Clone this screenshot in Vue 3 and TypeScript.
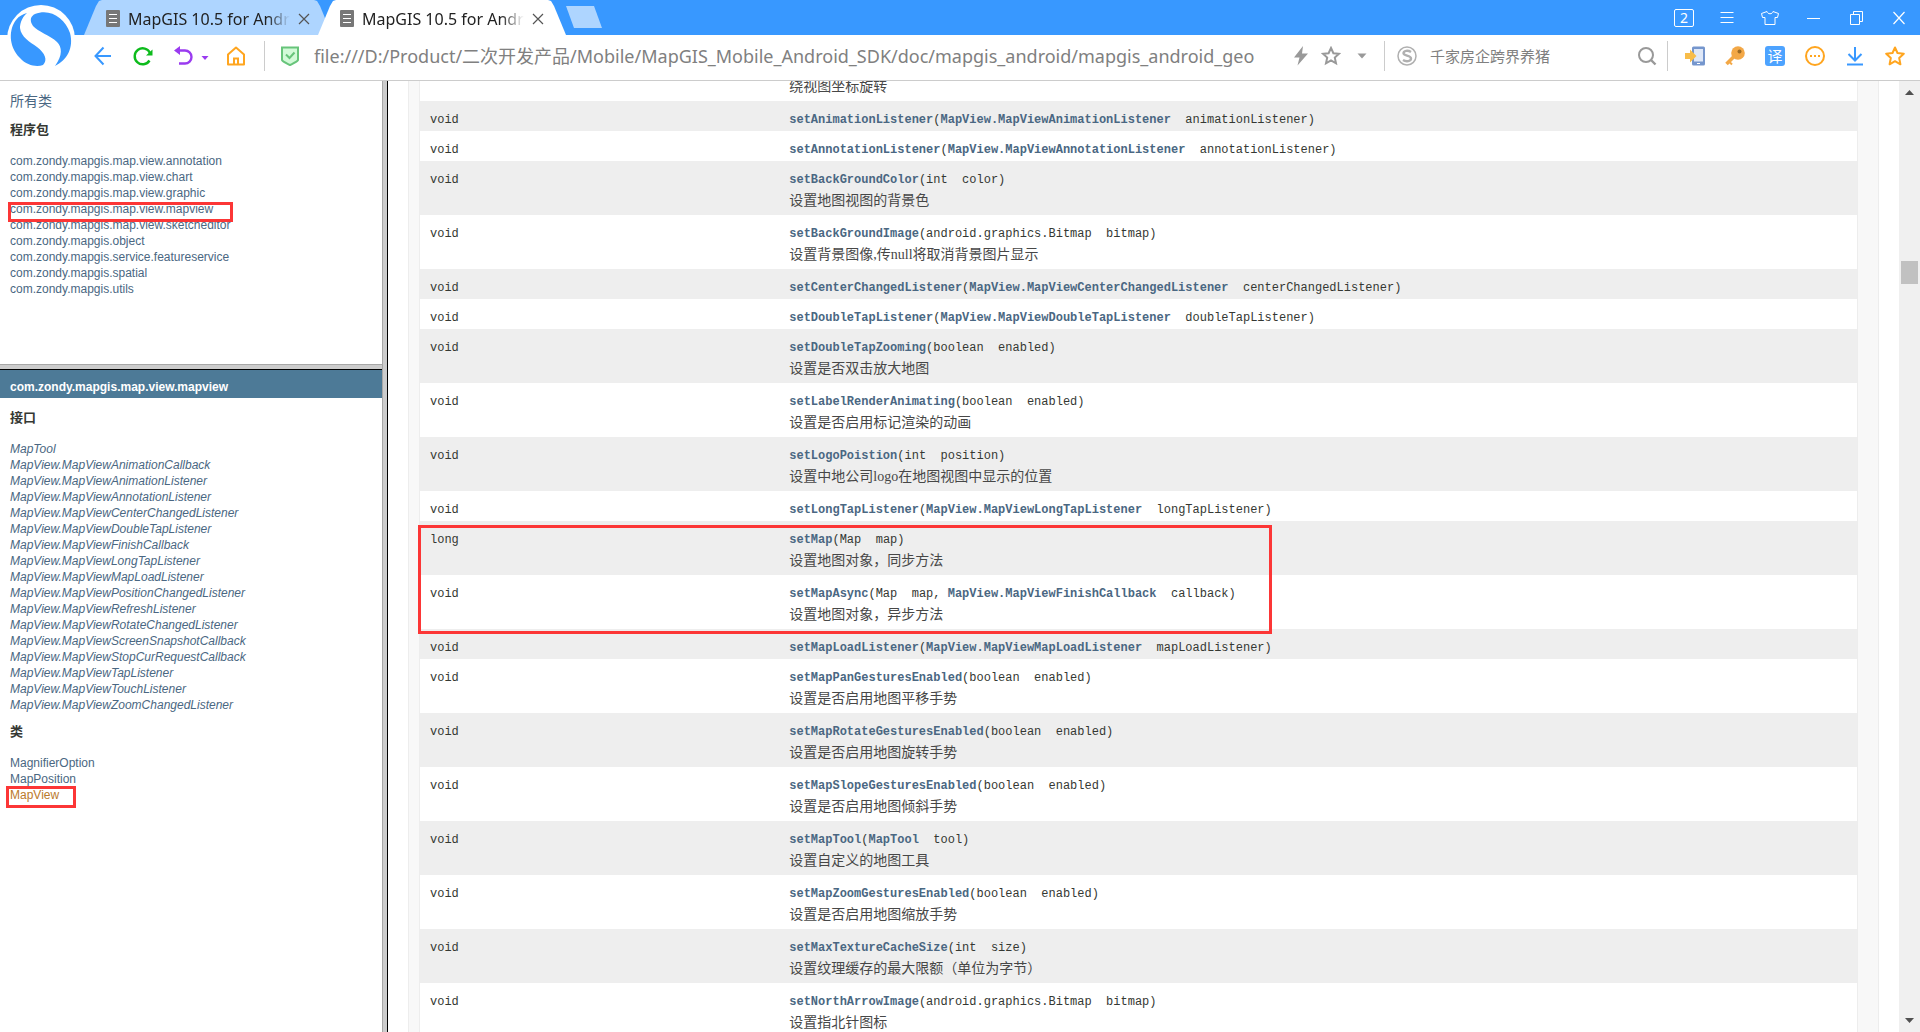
<script setup lang="ts">
import { ref } from 'vue'

interface Part {
  text: string
  link?: boolean
}
interface Method {
  type: string
  name: string
  params: Part[]
  note?: string
}

const t = (text: string): Part => ({ text })
const a = (text: string): Part => ({ text, link: true })
const gap = '\u00a0\u00a0'

const tabs = ref([
  { id: 1, title: 'MapGIS 10.5 for Andro', active: false },
  { id: 2, title: 'MapGIS 10.5 for Andro', active: true },
])

const address = ref(
  'file:///D:/Product/二次开发产品/Mobile/MapGIS_Mobile_Android_SDK/doc/mapgis_android/mapgis_android_geo',
)
const query = ref('')

const packages: string[] = [
  'com.zondy.mapgis.map.view.annotation',
  'com.zondy.mapgis.map.view.chart',
  'com.zondy.mapgis.map.view.graphic',
  'com.zondy.mapgis.map.view.mapview',
  'com.zondy.mapgis.map.view.sketcheditor',
  'com.zondy.mapgis.object',
  'com.zondy.mapgis.service.featureservice',
  'com.zondy.mapgis.spatial',
  'com.zondy.mapgis.utils',
]

const interfaces: string[] = [
  'MapTool',
  'MapView.MapViewAnimationCallback',
  'MapView.MapViewAnimationListener',
  'MapView.MapViewAnnotationListener',
  'MapView.MapViewCenterChangedListener',
  'MapView.MapViewDoubleTapListener',
  'MapView.MapViewFinishCallback',
  'MapView.MapViewLongTapListener',
  'MapView.MapViewMapLoadListener',
  'MapView.MapViewPositionChangedListener',
  'MapView.MapViewRefreshListener',
  'MapView.MapViewRotateChangedListener',
  'MapView.MapViewScreenSnapshotCallback',
  'MapView.MapViewStopCurRequestCallback',
  'MapView.MapViewTapListener',
  'MapView.MapViewTouchListener',
  'MapView.MapViewZoomChangedListener',
]

const classes: string[] = ['MagnifierOption', 'MapPosition', 'MapView']

const flag = (type: string): Part[] => [t(`${type}${gap}enabled`)]
const listener = (cls: string, arg: string): Part[] => [a(`MapView.${cls}`), t(`${gap}${arg}`)]

const methods: Method[] = [
  { type: 'void', name: 'rotateView', params: [t(`double${gap}angle`)], note: '绕视图坐标旋转' },
  { type: 'void', name: 'setAnimationListener', params: listener('MapViewAnimationListener', 'animationListener') },
  { type: 'void', name: 'setAnnotationListener', params: listener('MapViewAnnotationListener', 'annotationListener') },
  { type: 'void', name: 'setBackGroundColor', params: [t(`int${gap}color`)], note: '设置地图视图的背景色' },
  { type: 'void', name: 'setBackGroundImage', params: [t(`android.graphics.Bitmap${gap}bitmap`)], note: '设置背景图像,传null将取消背景图片显示' },
  { type: 'void', name: 'setCenterChangedListener', params: listener('MapViewCenterChangedListener', 'centerChangedListener') },
  { type: 'void', name: 'setDoubleTapListener', params: listener('MapViewDoubleTapListener', 'doubleTapListener') },
  { type: 'void', name: 'setDoubleTapZooming', params: flag('boolean'), note: '设置是否双击放大地图' },
  { type: 'void', name: 'setLabelRenderAnimating', params: flag('boolean'), note: '设置是否启用标记渲染的动画' },
  { type: 'void', name: 'setLogoPoistion', params: [t(`int${gap}position`)], note: '设置中地公司logo在地图视图中显示的位置' },
  { type: 'void', name: 'setLongTapListener', params: listener('MapViewLongTapListener', 'longTapListener') },
  { type: 'long', name: 'setMap', params: [t(`Map${gap}map`)], note: '设置地图对象，同步方法' },
  { type: 'void', name: 'setMapAsync', params: [t(`Map${gap}map, `), a('MapView.MapViewFinishCallback'), t(`${gap}callback`)], note: '设置地图对象，异步方法' },
  { type: 'void', name: 'setMapLoadListener', params: listener('MapViewMapLoadListener', 'mapLoadListener') },
  { type: 'void', name: 'setMapPanGesturesEnabled', params: flag('boolean'), note: '设置是否启用地图平移手势' },
  { type: 'void', name: 'setMapRotateGesturesEnabled', params: flag('boolean'), note: '设置是否启用地图旋转手势' },
  { type: 'void', name: 'setMapSlopeGesturesEnabled', params: flag('boolean'), note: '设置是否启用地图倾斜手势' },
  { type: 'void', name: 'setMapTool', params: [a('MapTool'), t(`${gap}tool`)], note: '设置自定义的地图工具' },
  { type: 'void', name: 'setMapZoomGesturesEnabled', params: flag('boolean'), note: '设置是否启用地图缩放手势' },
  { type: 'void', name: 'setMaxTextureCacheSize', params: [t(`int${gap}size`)], note: '设置纹理缓存的最大限额（单位为字节）' },
  { type: 'void', name: 'setNorthArrowImage', params: [t(`android.graphics.Bitmap${gap}bitmap`)], note: '设置指北针图标' },
]
</script>

<template>
  <div class="browser">
    <header class="chrome">
      <svg class="logo" viewBox="0 0 80 80" aria-hidden="true">
        <circle cx="41" cy="39" r="34" fill="#fff" />
        <path fill="#3898ff" d="M27 13C21 18 20 25 20 28C21 37 30 42 37 47C45 53 48 60 43 65C37 67 27 66 20 58C8 46 9 29 16 20C19 16 23 14 27 13Z" />
        <path fill="#3898ff" d="M35 14C50 8 65 18 70 33C74 48 67 60 55 66C63 55 62 47 57 42C50 35 38 32 33 26C29 20 31 16 35 14Z" />
      </svg>
      <div class="titlebar">
        <div class="tabs">
          <div v-for="tab in tabs" :key="tab.id" class="tab" :class="{ active: tab.active }">
            <svg class="doc" viewBox="0 0 14 18" aria-hidden="true">
              <rect width="14" height="17" y="0" rx="1" fill="#777" />
              <path d="M3 4.5H11M3 8.5H11M3 12.5H11" stroke="#fff" />
            </svg>
            <span class="tab-title">{{ tab.title }}</span>
            <button class="tab-close" type="button" aria-label="关闭标签">
              <svg viewBox="0 0 12 12"><path d="M1 1L11 11M11 1L1 11" stroke="#555" stroke-width="1.2" fill="none" /></svg>
            </button>
          </div>
          <button class="new-tab" type="button" aria-label="新建标签"></button>
        </div>
        <div class="window-tools">
          <button type="button" class="count">2</button>
          <button type="button" aria-label="菜单">
            <svg viewBox="0 0 20 20"><path d="M3.5 4.5H16.5M3.5 9.5H16.5M3.5 14.5H16.5" stroke="#fff" /></svg>
          </button>
          <button type="button" aria-label="皮肤">
            <svg viewBox="0 0 20 20"><path d="M7 3.5L1.5 5.5L2.5 9.5H5V16.5H15V9.5H17.5L18.5 5.5L13 3.5C12.5 6.5 7.5 6.5 7 3.5Z" stroke="#fff" fill="none" /></svg>
          </button>
          <button type="button" aria-label="最小化">
            <svg viewBox="0 0 20 20"><path d="M4 10.5H17" stroke="#fff" /></svg>
          </button>
          <button type="button" aria-label="还原">
            <svg viewBox="0 0 20 20"><path d="M4.5 6.5H13.5V16.5H4.5ZM7.5 6.5V3.5H16.5V13.5H13.5" stroke="#fff" fill="none" /></svg>
          </button>
          <button type="button" aria-label="关闭">
            <svg viewBox="0 0 20 20"><path d="M4.5 4L15.5 16M15.5 4L4.5 16" stroke="#fff" stroke-width="1.2" fill="none" /></svg>
          </button>
        </div>
      </div>

      <div class="toolbar">
        <div class="nav">
          <button type="button" aria-label="后退">
            <svg viewBox="0 0 20 20"><path d="M18 10H3M10.5 1.5L2.5 10L10.5 18.5" stroke="#3898ff" stroke-width="2" fill="none" /></svg>
          </button>
          <button type="button" aria-label="刷新">
            <svg viewBox="0 0 20 20"><path d="M16.5 14.5A8 8 0 1 1 17 7" stroke="#0dbb1c" stroke-width="2.4" fill="none" /><path d="M19.5 3.5V9.5H13Z" fill="#0dbb1c" /></svg>
          </button>
          <button type="button" aria-label="撤销">
            <svg viewBox="0 0 20 20"><path d="M3 4.5H12A6.500 6.500 0 0 1 12 17.500H6" stroke="#9a3bf0" stroke-width="2.400" fill="none" /><path d="M1 4.500L7 0V9Z" fill="#9a3bf0" /></svg>
          </button>
          <button type="button" class="caret" aria-label="撤销列表">
            <svg viewBox="0 0 10 6"><path d="M1.5 1H8.5L5 5Z" fill="#9a3bf0" /></svg>
          </button>
          <button type="button" aria-label="主页">
            <svg viewBox="0 0 20 20"><path d="M2 8.5L10 1.500L18 8.500V18.500H2Z" stroke="#ffa51f" stroke-width="2" fill="none" stroke-linejoin="round" /><path d="M8 18V12.500H12V18" stroke="#ffa51f" stroke-width="2" fill="none" /></svg>
          </button>
        </div>
        <div class="location">
          <svg class="icon" viewBox="0 0 20 20" aria-hidden="true"><path d="M2 1.5H18V14C17 16 14 17 10 19C6 17 3 16 2 14Z" stroke="#67c47a" stroke-width="2" fill="#d2fad8" /><path d="M6 8.5L9.5 12L14.5 6.500" stroke="#67c47a" stroke-width="2" fill="none" /></svg>
          <input v-model="address" class="address" type="text" aria-label="地址" />
          <button type="button" aria-label="极速模式">
            <svg viewBox="0 0 20 20"><path d="M12 0L3 11.5H8.500L6.500 19.500L17 7.500H11Z" fill="#999" /></svg>
          </button>
          <button type="button" class="fav" aria-label="收藏此页">
            <svg viewBox="0 0 20 20"><path d="M10 2L12.4 7.2L18 7.8L13.800 11.600L15 17.300L10 14.400L5 17.300L6.200 11.600L2 7.800L7.600 7.200Z" stroke="#999" stroke-width="2" fill="none" /></svg>
          </button>
          <button type="button" class="caret" aria-label="地址列表">
            <svg viewBox="0 0 10 6"><path d="M0.5 0.5H9.5L5 5.5Z" fill="#999" /></svg>
          </button>
        </div>
        <div class="search">
          <svg class="icon" viewBox="0 0 20 20" aria-hidden="true"><circle cx="10" cy="10" r="9" stroke="#b0b0b0" stroke-width="1.5" fill="none" /><path d="M14 6C11 4 6.5 4.5 6.5 7.3C6.500 10.300 14 9 14 12.500C14 15.500 9 16 6 14" stroke="#b0b0b0" stroke-width="2.400" fill="none" /></svg>
          <input v-model="query" type="text" placeholder="千家房企跨界养猪" aria-label="搜索" />
          <button type="button" aria-label="搜索">
            <svg viewBox="0 0 20 20"><circle cx="9" cy="9" r="7" stroke="#999" stroke-width="2" fill="none" /><path d="M14 14L18.5 18.500" stroke="#999" stroke-width="2.400" /></svg>
          </button>
        </div>
        <div class="extensions">
          <button type="button" aria-label="发送到手机">
            <svg viewBox="0 0 20 20"><rect x="7" y="0.5" width="13" height="19" rx="1.5" fill="#7596cd" /><rect x="9" y="3" width="9" height="12.5" fill="#dfe8f8" /><path d="M12 17.5H15" stroke="#fff" /><path d="M0 7H5V3.5L11.500 10L5 16.500V13H0Z" fill="#f8bd4a" /></svg>
          </button>
          <button type="button" aria-label="密码">
            <svg viewBox="0 0 20 20"><path d="M10 9.5L1.500 18" stroke="#f3a847" stroke-width="3.500" /><path d="M4 15.500L7 18.500" stroke="#f3a847" stroke-width="2" /><circle cx="13" cy="7" r="6.800" fill="#f3a847" /><circle cx="14.500" cy="5.500" r="2" fill="#9c6a24" /></svg>
          </button>
          <button type="button" class="translate">译</button>
          <button type="button" aria-label="更多">
            <svg viewBox="0 0 20 20"><circle cx="10" cy="10" r="9" stroke="#ffa51f" stroke-width="2" fill="none" /><path d="M5 9H7V11H5ZM9 9H11V11H9ZM13 9H15V11H13Z" fill="#ffa51f" /></svg>
          </button>
          <button type="button" aria-label="下载">
            <svg viewBox="0 0 20 20"><path d="M10 1V14M3.5 8L10 14.5L16.500 8M2 18.500H18" stroke="#3898ff" stroke-width="2" fill="none" /></svg>
          </button>
          <button type="button" aria-label="收藏夹">
            <svg viewBox="0 0 20 20"><path d="M10 1.5L12.5 7L18.800 7.700L14.200 12L15.400 18.300L10 15.200L4.600 18.300L5.800 12L1.200 7.700L7.500 7Z" stroke="#ffa51f" stroke-width="2" fill="none" stroke-linejoin="round" /></svg>
          </button>
        </div>
      </div>
    </header>

    <div class="frames">
      <aside class="side">
        <nav class="frame packages">
          <a class="all" href="#all">所有类</a>
          <h2>程序包</h2>
          <ul>
            <li v-for="name in packages" :key="name"><a :href="'#' + name">{{ name }}</a></li>
          </ul>
          <div class="mark mark-package"></div>
        </nav>
        <nav class="frame types">
          <h1><a href="#package">com.zondy.mapgis.map.view.mapview</a></h1>
          <h2>接口</h2>
          <ul class="italic">
            <li v-for="name in interfaces" :key="name"><a :href="'#' + name">{{ name }}</a></li>
          </ul>
          <h2>类</h2>
          <ul>
            <li v-for="name in classes" :key="name">
              <a :href="'#' + name" :class="{ hot: name === 'MapView' }">{{ name }}</a>
            </li>
          </ul>
          <div class="mark mark-class"></div>
        </nav>
      </aside>

      <main class="doc-frame">
        <div class="summary">
          <div class="table-box">
            <table>
              <tbody>
                <tr v-for="m in methods" :key="m.name">
                  <td class="type"><code>{{ m.type }}</code></td>
                  <td>
                    <code><a :href="'#' + m.name">{{ m.name }}</a>(<template v-for="(p, i) in m.params" :key="i"><a v-if="p.link" :href="'#' + p.text">{{ p.text }}</a><template v-else>{{ p.text }}</template></template>)</code>
                    <div v-if="m.note" class="note">{{ m.note }}</div>
                  </td>
                </tr>
              </tbody>
            </table>
          </div>
        </div>
        <div class="mark mark-methods"></div>
      </main>

      <div class="scrollbar" aria-hidden="true">
        <svg viewBox="0 0 9 5"><path d="M4.5 0L9 5H0Z" fill="#505050" /></svg>
        <div class="track"><div class="thumb"></div></div>
        <svg viewBox="0 0 9 5"><path d="M0 0H9L4.5 5Z" fill="#505050" /></svg>
      </div>
    </div>
  </div>
</template>

<style>
body {
  margin: 0;
}
</style>

<style scoped>
.browser {
  display: flex;
  flex-direction: column;
  height: 100vh;
  overflow: hidden;
  background: #fff;
  color: #353833;
  font-family: "Liberation Sans", "Noto Sans CJK SC", sans-serif;
  font-size: 12px;
}
* {
  box-sizing: border-box;
}
button {
  display: flex;
  align-items: center;
  justify-content: center;
  padding: 0;
  border: 0;
  background: none;
  width: 20px;
  height: 20px;
  flex: none;
}
button svg {
  display: block;
  width: 100%;
  height: 100%;
}
input {
  border: 0;
  padding: 0;
  outline: 0;
  background: none;
  min-width: 0;
}
a {
  color: #4a6782;
  text-decoration: none;
}

/* window chrome */
.chrome {
  position: relative;
  flex: none;
  border-bottom: 1px solid #ccc;
}
.logo {
  position: absolute;
  left: 0;
  top: 0;
  width: 80px;
  height: 80px;
}
.titlebar {
  display: flex;
  justify-content: space-between;
  height: 35px;
  padding: 0 11px 0 84px;
  background: #3898ff;
}
.tabs {
  display: flex;
  align-items: flex-end;
}
.tab {
  display: flex;
  align-items: center;
  width: 248px;
  height: 35px;
  padding: 3px 22px 0;
  background: #aed5ff;
  clip-path: polygon(0 100%, 12px 6px, 15px 1px, 18px 0, 230px 0, 233px 1px, 236px 6px, 100% 100%);
}
.tab.active {
  margin-left: -14px;
  background: #fff;
}
.doc {
  width: 14px;
  height: 18px;
  flex: none;
}
.tab-title {
  flex: 1;
  margin: 0 8px;
  overflow: hidden;
  white-space: nowrap;
  font: 16px/24px "Noto Sans", "Noto Sans CJK SC", sans-serif;
  color: #222;
  mask-image: linear-gradient(90deg, #000 86%, transparent);
}
.tab-close {
  width: 12px;
  height: 12px;
}
.new-tab {
  align-self: flex-start;
  width: 36px;
  height: 22px;
  margin-top: 6px;
  background: #aed5ff;
  clip-path: polygon(0 0, 28px 0, 100% 100%, 8px 100%);
}
.window-tools {
  display: flex;
  align-items: center;
  gap: 23px;
}
.count {
  border: 1px solid #fff;
  border-radius: 2px;
  height: 18px;
  color: #fff;
  font: 14px/16px "Noto Sans", sans-serif;
}

.toolbar {
  display: flex;
  align-items: center;
  height: 45px;
  padding: 0 15px 3px 93px;
}
.nav,
.location,
.search,
.extensions {
  display: flex;
  align-items: center;
}
.nav {
  gap: 20px;
  padding-right: 18px;
}
.nav .caret {
  margin: 4px -4px 0 -13px;
}
.caret {
  width: 10px;
  height: 6px;
}
.location,
.search {
  height: 30px;
  border-left: 1px solid #ccc;
}
.location {
  flex: 1;
  min-width: 0;
  padding: 0 17px 0 15px;
}
.icon {
  width: 20px;
  height: 20px;
  flex: none;
}
.address {
  flex: 1;
  margin: 0 4px 0 14px;
  font: 18px/26px "Noto Sans", "Noto Sans CJK SC", sans-serif;
  color: #808080;
}
.location .fav {
  margin: 0 16px 0 10px;
}
.search {
  width: 284px;
  padding: 0 10px 0 12px;
  border-right: 1px solid #ccc;
}
.search input {
  flex: 1;
  margin: 0 13px;
  font: 15px/22px "Noto Sans CJK SC", sans-serif;
}
.search input::placeholder {
  color: #808080;
  opacity: 1;
}
.extensions {
  gap: 20px;
  padding-left: 17px;
}
.translate {
  border-radius: 3px;
  background: #4da3ff;
  color: #fff;
  font: 15px/20px "Noto Sans CJK SC", sans-serif;
}

/* frames */
.frames {
  display: flex;
  flex: 1;
  min-height: 0;
}
.side {
  display: flex;
  flex-direction: column;
  width: 388px;
  flex: none;
  border-right: 1px solid #000;
  box-shadow: inset -4px 0 #ccc, inset -5px 0 #a7a7a7;
  padding-right: 5px;
}
.frame {
  position: relative;
  overflow: hidden;
}
.packages {
  height: 289px;
  flex: none;
  padding: 10px 10px 0;
  border-bottom: 1px solid #000;
  box-shadow: inset 0 -4px #ccc, inset 0 -5px #a7a7a7;
}
.types {
  flex: 1;
}
.all {
  display: block;
  font-size: 14px;
  line-height: 20px;
}
.frame h2 {
  margin: 0;
  font-size: 13px;
  line-height: 20px;
}
.packages h2 {
  margin: 9px 0 13px;
}
.types h2 {
  margin: 10px 10px 13px;
}
.types h2 ~ h2 {
  margin-top: 9px;
}
.types ul {
  margin: 0 10px;
}
.frame h1 {
  margin: 0;
  padding: 7px 10px 1px;
  background: #4d7a97;
  font-size: 12px;
  line-height: 20px;
}
.frame h1 a {
  color: #fff;
}
ul {
  margin: 0;
  padding: 0;
  list-style: none;
}
li {
  height: 16px;
  line-height: 16px;
}
.italic {
  font-style: italic;
}
.hot {
  color: #bb7a2a;
}

/* red call-outs laid over the page */
.mark {
  position: absolute;
  border: 3px solid #fc3636;
}
.mark-package {
  left: 8px;
  top: 121px;
  width: 225px;
  height: 20px;
}
.mark-class {
  left: 6px;
  top: 416px;
  width: 70px;
  height: 22px;
}
.mark-methods {
  left: 30px;
  top: 444px;
  width: 854px;
  height: 109px;
}

.doc-frame {
  position: relative;
  flex: 1;
  min-width: 0;
  overflow: hidden;
  padding: 0 20px;
}
.summary {
  padding: 0 20px 0 10px;
  border: solid #ededed;
  border-width: 0 1px;
  background: #f8f8f8;
}
.table-box {
  border: solid #ededed;
  border-width: 0 1px;
  background: #fff;
}
table {
  width: 100%;
  margin-top: -34px;
  border-collapse: collapse;
  table-layout: fixed;
}
td {
  padding: 10px 3px 2px 10px;
  vertical-align: top;
}
td.type {
  width: 25%;
}
tr:nth-child(even) {
  background: #eee;
}
code {
  display: block;
  font: 12px/18px "Liberation Mono", monospace;
  white-space: nowrap;
}
code a {
  font-weight: bold;
}
.note {
  padding: 1px 0;
  font: 14px/22px "Liberation Serif", "Noto Sans CJK SC", serif;
  color: #474747;
}

.scrollbar {
  display: flex;
  flex-direction: column;
  align-items: center;
  width: 21px;
  flex: none;
  padding: 9px 2px;
  background: #f0f0f0;
}
.scrollbar svg {
  width: 9px;
  height: 5px;
}
.track {
  flex: 1;
  width: 100%;
  padding-top: 166px;
}
.thumb {
  height: 23px;
  background: #c1c1c1;
}
</style>
